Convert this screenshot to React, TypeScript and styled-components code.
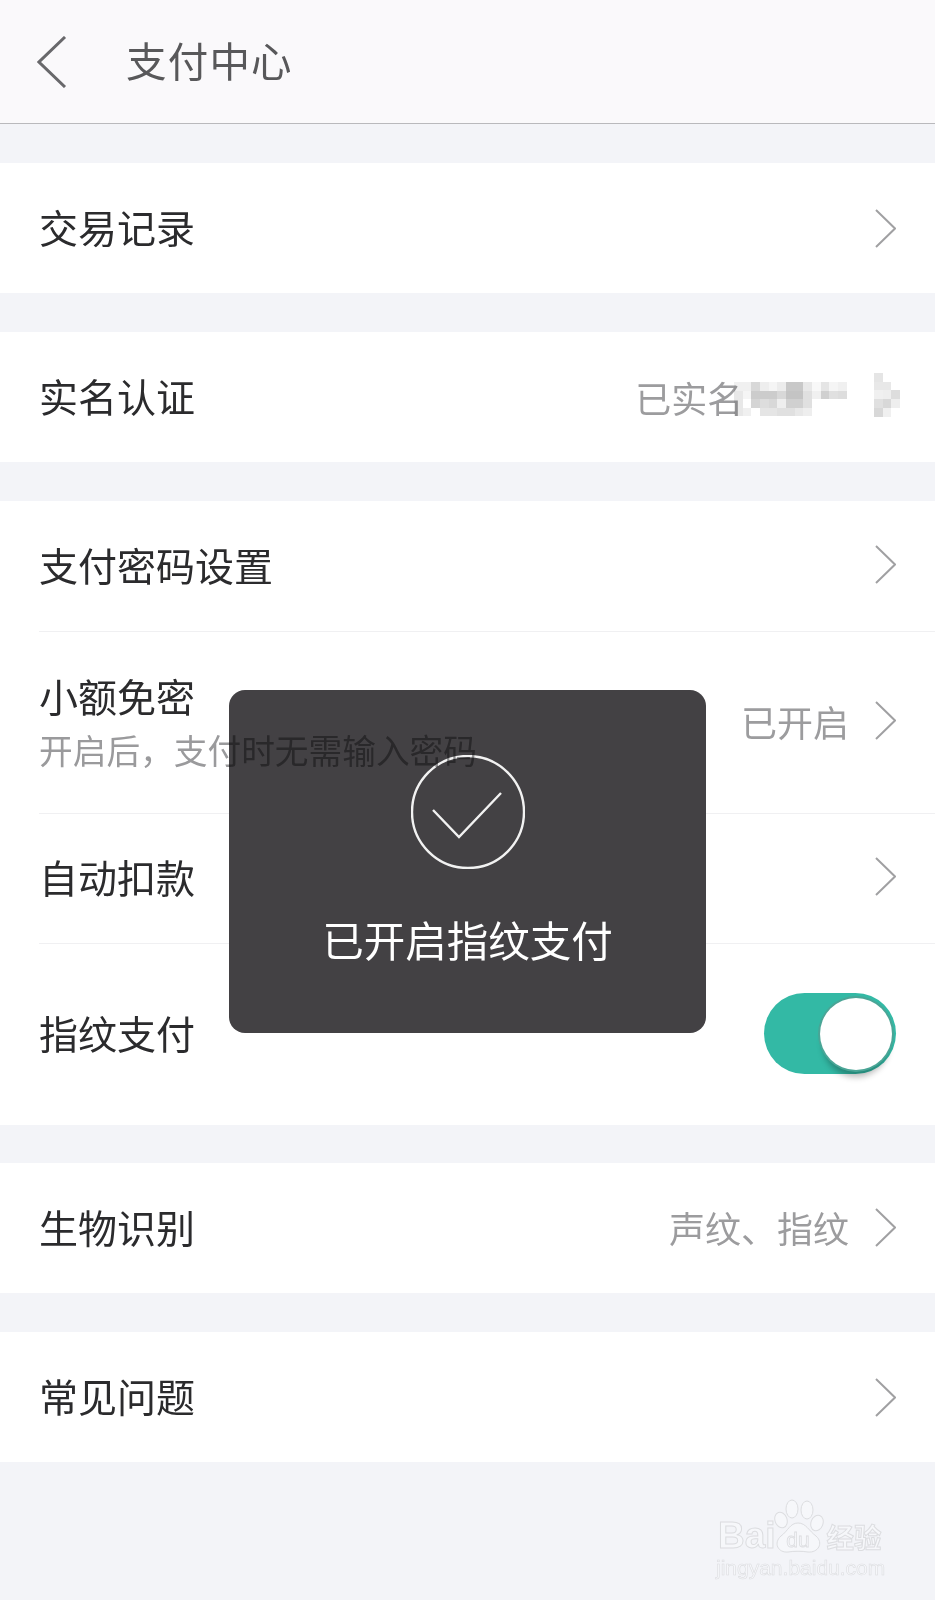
import React from 'react';
import styled, { createGlobalStyle } from 'styled-components';

const GlobalStyle = createGlobalStyle`
  html, body {
    margin: 0;
    padding: 0;
    background: #f3f4f8;
  }
  * {
    box-sizing: border-box;
  }
`;

const Page = styled.div`
  position: relative;
  width: 935px;
  height: 1600px;
  overflow: hidden;
  background: #f3f4f8;
  font-family: 'Noto Sans CJK SC', 'Liberation Sans', sans-serif;
`;

const Header = styled.header`
  display: flex;
  align-items: center;
  height: 124px;
  padding-left: 37px;
  background: #faf9fb;
  border-bottom: 1px solid #b9b9bc;
`;

const Title = styled.h1`
  margin: 0 0 0 59px;
  padding-bottom: 4px;
  font-size: 40.5px;
  line-height: 48px;
  letter-spacing: 1.2px;
  font-weight: 400;
  color: #58585a;
`;

const Group = styled.section<{ $gap?: number }>`
  margin-top: ${p => p.$gap ?? 39}px;
  background: #fff;
`;

const Row = styled.div<{ $height: number; $divider?: boolean }>`
  display: flex;
  align-items: center;
  justify-content: space-between;
  height: ${p => p.$height}px;
  margin-left: 39px;
  padding-right: 39px;
  border-bottom: ${p => (p.$divider ? '1px solid #f0f0f2' : 'none')};
`;

const LabelStack = styled.div`
  display: flex;
  flex-direction: column;
  padding-bottom: 3px;
`;

const Label = styled.span`
  padding-bottom: 5px;
  font-size: 39px;
  line-height: 50px;
  color: #2b2b2d;
`;

const SubLabel = styled.span`
  position: relative;
  z-index: 2;
  margin-top: 2px;
  font-size: 33.7px;
  line-height: 46px;
  white-space: nowrap;
  color: #9a9a9c;
  mix-blend-mode: multiply;
`;

const Trailing = styled.div<{ $lift?: number }>`
  display: flex;
  align-items: center;
  padding-bottom: ${p => (p.$lift ?? 0) * 2}px;
`;

const Value = styled.span`
  font-size: 36px;
  line-height: 46px;
  color: #9c9c9e;
`;

const ChevronIcon = styled.svg<{ $gap?: number }>`
  display: block;
  margin-left: ${p => p.$gap ?? 0}px;
`;

const MosaicIcon = styled.svg<{ $left: number; $right?: number; $top?: number; $bottom?: number }>`
  display: block;
  flex: none;
  margin: ${p => p.$top ?? 0}px ${p => p.$right ?? 0}px ${p => p.$bottom ?? 0}px ${p => p.$left}px;
  mix-blend-mode: multiply;
`;

const Toggle = styled.div`
  display: flex;
  justify-content: flex-end;
  align-items: center;
  width: 132px;
  height: 81px;
  margin-bottom: 2px;
  padding-right: 4px;
  border-radius: 41px;
  background: #33b9a5;
`;

const Knob = styled.div`
  width: 72px;
  height: 72px;
  border-radius: 50%;
  background: #fff;
  box-shadow: 0 0 0 2px #4aa596, 0 10px 6px -3px rgba(0, 0, 0, 0.28);
`;

const Toast = styled.div`
  position: absolute;
  top: 690px;
  left: 229px;
  z-index: 1;
  display: flex;
  flex-direction: column;
  align-items: center;
  width: 477px;
  height: 343px;
  padding-top: 65px;
  border-radius: 16px;
  background: #434144;
`;

const ToastText = styled.div`
  margin-top: 43px;
  font-size: 41.5px;
  line-height: 54px;
  color: #fff;
`;

const Watermark = styled.div`
  position: absolute;
  left: 716px;
  top: 1498px;
  width: 172px;
  height: 84px;
  color: #f6f7fa;
  -webkit-text-stroke: 1px #dcdde0;
`;

const WatermarkLogo = styled.div`
  display: flex;
  align-items: flex-end;
  height: 56px;
  font-family: 'Liberation Sans', sans-serif;
  font-weight: 700;
`;

const WatermarkBai = styled.span`
  margin-left: 2px;
  font-size: 37px;
  line-height: 36px;
`;

const WatermarkPaw = styled.svg`
  display: block;
  flex: none;
  margin-left: -2px;
`;

const WatermarkCn = styled.span`
  margin-left: 3px;
  font-family: 'Noto Sans CJK SC', sans-serif;
  font-size: 27.5px;
  line-height: 36px;
  white-space: nowrap;
`;

const WatermarkUrl = styled.div`
  margin-top: 2px;
  font-family: 'Liberation Sans', sans-serif;
  font-size: 21px;
  line-height: 24px;
  white-space: nowrap;
  -webkit-text-stroke: 0.6px #dcdde0;
`;

const BackIcon = () => (
  <svg width="30" height="52" viewBox="0 0 30 52" fill="none">
    <path d="M28 1 L2 26 L28 51" stroke="#68686b" strokeWidth="3" />
  </svg>
);

const Chevron: React.FC<{ gap?: number }> = ({ gap }) => (
  <ChevronIcon $gap={gap} width="21" height="39" viewBox="0 0 21 39" fill="none">
    <path d="M1 1 L20 19.5 L1 38" stroke="#a0a0a2" strokeWidth="2" />
  </ChevronIcon>
);

const nameMosaic = [
  ['f0', 'f0', 'd8', 'ee', 'f5', 'ec', 'c8', 'c8', 'e8', 'f8', 'e5', 'f5', 'f0'],
  ['e8', 'f5', 'cc', 'cc', 'cc', 'd8', 'c4', 'c4', 'e0', 'f0', 'd0', 'e0', 'dd'],
  ['e8', 'ff', 'd5', 'dd', 'd8', 'ee', 'd0', 'd0', 'e0', 'ff', 'ff', 'ff', 'ff'],
  ['e8', 'f0', 'ff', 'e5', 'e5', 'e0', 'e0', 'e8', 'ee', 'ff', 'ff', 'ff', 'ff'],
];

const chevronMosaic = [
  ['e5', 'ff', 'ff'],
  ['e8', 'e8', 'ff'],
  ['f0', 'ee', 'dd'],
  ['e0', 'd8', 'ee'],
  ['d8', 'f0', 'ff'],
];

interface MosaicProps {
  cells: string[][];
  left: number;
  right?: number;
  top?: number;
  bottom?: number;
}

const Mosaic: React.FC<MosaicProps> = ({ cells, left, right, top, bottom }) => {
  const size = 8.67;
  const width = cells[0].length * size;
  const height = cells.length * size;
  return (
    <MosaicIcon
      $left={left}
      $right={right}
      $top={top}
      $bottom={bottom}
      width={width}
      height={height}
      viewBox={`0 0 ${width} ${height}`}
      shapeRendering="crispEdges"
    >
      {cells.map((row, y) =>
        row.map((c, x) => (
          <rect
            key={`${x}-${y}`}
            x={x * size}
            y={y * size}
            width={size + 0.5}
            height={size + 0.5}
            fill={`#${c}${c}${c}`}
          />
        ))
      )}
    </MosaicIcon>
  );
};

const App: React.FC = () => (
  <Page>
    <GlobalStyle />
    <Header>
      <BackIcon />
      <Title>支付中心</Title>
    </Header>

    <Group>
      <Row $height={130}>
        <Label>交易记录</Label>
        <Chevron />
      </Row>
    </Group>

    <Group>
      <Row $height={130}>
        <Label>实名认证</Label>
        <Trailing>
          <Value>已实名</Value>
          <Mosaic cells={nameMosaic} left={-9} top={4} />
          <Mosaic cells={chevronMosaic} left={27} right={-4} bottom={4} />
        </Trailing>
      </Row>
    </Group>

    <Group>
      <Row $height={131} $divider>
        <Label>支付密码设置</Label>
        <Trailing $lift={2}>
          <Chevron />
        </Trailing>
      </Row>
      <Row $height={182} $divider>
        <LabelStack>
          <Label>小额免密</Label>
          <SubLabel>开启后，支付时无需输入密码</SubLabel>
        </LabelStack>
        <Trailing $lift={2}>
          <Value>已开启</Value>
          <Chevron gap={26} />
        </Trailing>
      </Row>
      <Row $height={130} $divider>
        <Label>自动扣款</Label>
        <Trailing $lift={2}>
          <Chevron />
        </Trailing>
      </Row>
      <Row $height={181}>
        <Label>指纹支付</Label>
        <Toggle>
          <Knob />
        </Toggle>
      </Row>
    </Group>

    <Group $gap={38}>
      <Row $height={130}>
        <Label>生物识别</Label>
        <Trailing $lift={1}>
          <Value>声纹、指纹</Value>
          <Chevron gap={26} />
        </Trailing>
      </Row>
    </Group>

    <Group>
      <Row $height={130}>
        <Label>常见问题</Label>
        <Chevron />
      </Row>
    </Group>

    <Toast>
      <svg width="114" height="114" viewBox="0 0 114 114" fill="none">
        <circle cx="57" cy="57" r="56" stroke="#f2f2f2" strokeWidth="2.4" />
        <path d="M22 55 L48 82 L90 38" stroke="#f2f2f2" strokeWidth="2.4" />
      </svg>
      <ToastText>已开启指纹支付</ToastText>
    </Toast>

    <Watermark>
      <WatermarkLogo>
        <WatermarkBai>Bai</WatermarkBai>
        <WatermarkPaw width="50" height="56" viewBox="0 0 50 56">
          <g fill="#f6f7fa" stroke="#dcdde0" strokeWidth="1">
            <ellipse cx="7" cy="22" rx="6" ry="8" transform="rotate(-20 7 22)" />
            <ellipse cx="18" cy="11" rx="6" ry="9" />
            <ellipse cx="33" cy="12" rx="6" ry="9" />
            <ellipse cx="43" cy="25" rx="6" ry="8" transform="rotate(20 43 25)" />
            <path d="M24 25 C32 25 35 33 42 38 C50 45 44 55 34 54 C28 53 20 53 14 54 C4 55 -1 45 7 38 C14 33 16 25 24 25 Z" />
          </g>
          <text
            x="24"
            y="49"
            textAnchor="middle"
            fontFamily="Liberation Sans, sans-serif"
            fontWeight="400"
            fontSize="21"
            fill="#f6f7fa"
            stroke="#dcdde0"
            strokeWidth="0.8"
          >
            du
          </text>
        </WatermarkPaw>
        <WatermarkCn>经验</WatermarkCn>
      </WatermarkLogo>
      <WatermarkUrl>jingyan.baidu.com</WatermarkUrl>
    </Watermark>
  </Page>
);

export default App;
